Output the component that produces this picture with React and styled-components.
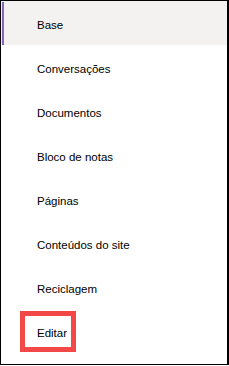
import React from 'react'
import styled, { createGlobalStyle } from 'styled-components'

const GlobalStyle = createGlobalStyle`
  html, body {
    margin: 0;
    padding: 0;
    background: #ffffff;
  }
`

const items = [
  'Base',
  'Conversações',
  'Documentos',
  'Bloco de notas',
  'Páginas',
  'Conteúdos do site',
  'Reciclagem',
  'Editar',
]

function App() {
  return (
    <>
      <GlobalStyle />
      <Frame>
        <Nav>
          {items.map((label, i) => (
            <NavItem key={label} selected={i === 0}>
              {label}
              {label === 'Editar' && <Highlight />}
            </NavItem>
          ))}
        </Nav>
      </Frame>
    </>
  )
}

export default App

const Frame = styled.div`
  box-sizing: border-box;
  width: 229px;
  height: 365px;
  border-top: 1px solid #000;
  border-left: 1px solid #000;
  border-right: 2px solid #000;
  border-bottom: 1px solid #000;
  background: #fff;
  font-family: "Liberation Sans", Arial, sans-serif;
`

const Nav = styled.nav`
  display: flex;
  flex-direction: column;
`

const NavItem = styled.div`
  position: relative;
  box-sizing: border-box;
  height: 44px;
  display: flex;
  align-items: center;
  padding: 4px 0 0 36px;
  font-size: 11.5px;
  color: #000;
  background: ${p => (p.selected ? '#f3f2f1' : 'transparent')};

  &::before {
    content: "";
    position: absolute;
    left: 1px;
    top: 1px;
    bottom: 0;
    width: 2px;
    background: ${p => (p.selected ? '#8764b8' : 'transparent')};
  }
`

const Highlight = styled.span`
  position: absolute;
  left: 19px;
  top: 2px;
  width: 56px;
  height: 41px;
  box-sizing: border-box;
  border: 5px solid #f24848;
  pointer-events: none;
`
